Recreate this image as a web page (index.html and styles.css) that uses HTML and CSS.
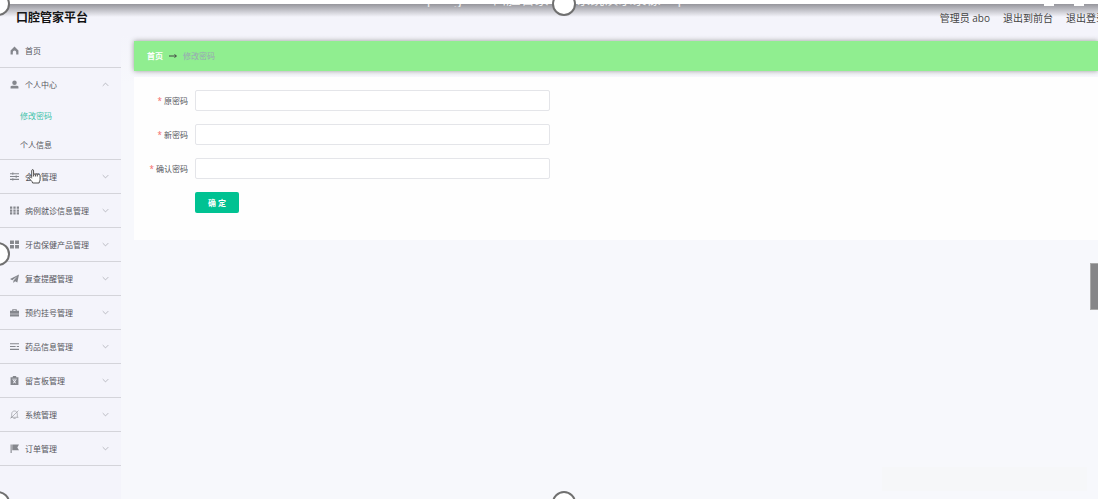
FILE: index.html
```html
<!DOCTYPE html>
<html lang="zh-CN">
<head>
<meta charset="utf-8">
<title>口腔管家平台</title>
<link rel="stylesheet" href="styles.css">
</head>
<body>
<div class="page">
  <header class="header">
    <h1 class="brand">口腔管家平台</h1>
    <nav class="account">
      <span>管理员 abo</span>
      <a href="#">退出到前台</a>
      <a href="#">退出登录</a>
    </nav>
  </header>
  <div class="body">
    <nav class="sidebar">
      <div class="group"><a class="item" href="#"><svg class="icon" viewBox="0 0 16 16"><path d="M8 1 1 8v7h4v-4a3 3 0 0 1 6 0v4h4V8z"/></svg><span>首页</span></a></div>
      <div class="group">
        <a class="item open" href="#"><svg class="icon" viewBox="0 0 16 16"><circle cx="8" cy="5" r="4"/><path d="M1 15v-3c0-2 2-2 4-2h6c2 0 4 0 4 2v3z"/></svg><span>个人中心</span><svg class="arrow" viewBox="0 0 10 10"><path d="m1 7 4-4 4 4"/></svg></a>
        <a class="sub active" href="#">修改密码</a>
        <a class="sub" href="#">个人信息</a>
      </div>
      <div class="group"><a class="item" href="#"><svg class="icon line" viewBox="0 0 16 16"><path d="M0 3h16M0 8h16M0 13h16M5 1v4M11 6v4M5 11v4"/></svg><span>会员管理</span><svg class="arrow" viewBox="0 0 10 10"><path d="m1 3 4 4 4-4"/></svg></a></div>
      <div class="group"><a class="item" href="#"><svg class="icon" viewBox="0 0 16 16"><path d="M0 1h4v4H0zM6 1h4v4H6zM12 1h4v4h-4zM0 6h4v4H0zM6 6h4v4H6zM12 6h4v4h-4zM0 11h4v4H0zM6 11h4v4H6zM12 11h4v4h-4z"/></svg><span>病例就诊信息管理</span><svg class="arrow" viewBox="0 0 10 10"><path d="m1 3 4 4 4-4"/></svg></a></div>
      <div class="group"><a class="item" href="#"><svg class="icon" viewBox="0 0 16 16"><path d="M0 1h7v6H0zM9 1h7v6H9zM0 9h7v6H0zM9 9h7v6H9z"/></svg><span>牙齿保健产品管理</span><svg class="arrow" viewBox="0 0 10 10"><path d="m1 3 4 4 4-4"/></svg></a></div>
      <div class="group"><a class="item" href="#"><svg class="icon" viewBox="0 0 16 16"><path d="M16 1 0 9l4 2 9-7-7 8v4l3-3 4 2z"/></svg><span>复查提醒管理</span><svg class="arrow" viewBox="0 0 10 10"><path d="m1 3 4 4 4-4"/></svg></a></div>
      <div class="group"><a class="item" href="#"><svg class="icon" viewBox="0 0 16 16"><path d="M4 5V2h8v3h4v5H0V5zM6 5h4V3.500H6zM0 11h16v4H0z"/></svg><span>预约挂号管理</span><svg class="arrow" viewBox="0 0 10 10"><path d="m1 3 4 4 4-4"/></svg></a></div>
      <div class="group"><a class="item" href="#"><svg class="icon line" viewBox="0 0 16 16"><path d="M0 3h16M0 8h10M12 8h4M0 13h16"/></svg><span>药品信息管理</span><svg class="arrow" viewBox="0 0 10 10"><path d="m1 3 4 4 4-4"/></svg></a></div>
      <div class="group"><a class="item" href="#"><svg class="icon" viewBox="0 0 16 16"><path fill-rule="evenodd" d="M1 2h4V0h6v2h4v14H1zM4 5v1h8V5zM5 7l2 3-2 3h2l1-2 1 2h2l-2-3 2-3H9L8 9 7 7z"/></svg><span>留言板管理</span><svg class="arrow" viewBox="0 0 10 10"><path d="m1 3 4 4 4-4"/></svg></a></div>
      <div class="group"><a class="item" href="#"><svg class="icon thin" viewBox="0 0 16 16"><path d="M1 13h14M3 13V7c0-7 10-7 10 0v6M6 15h4M15 1 1 15"/></svg><span>系统管理</span><svg class="arrow" viewBox="0 0 10 10"><path d="m1 3 4 4 4-4"/></svg></a></div>
      <div class="group"><a class="item" href="#"><svg class="icon" viewBox="0 0 16 16"><path d="M1 1h2v15H1zM4 1h12l-3 5 3 5H4z"/></svg><span>订单管理</span><svg class="arrow" viewBox="0 0 10 10"><path d="m1 3 4 4 4-4"/></svg></a></div>
    </nav>
    <main class="main">
      <div class="crumbs"><a href="#">首页</a><svg class="crumb-arrow" viewBox="0 0 16 8"><path d="M0 4h14M11 1l4 3-4 3"/></svg><span>修改密码</span></div>
      <form class="card">
        <div class="field"><label for="old"><i>*</i> 原密码</label><input id="old" type="password"></div>
        <div class="field"><label for="new"><i>*</i> 新密码</label><input id="new" type="password"></div>
        <div class="field"><label for="again"><i>*</i> 确认密码</label><input id="again" type="password"></div>
        <button class="submit" type="button">确 定</button>
      </form>
    </main>
  </div>
  <div class="shade"></div>
  <div class="topline"></div>
  <div class="caption">springboot口腔管家平台系统演示录像.mp4</div>
  <div class="controls"><i></i><i></i></div>
  <i class="handle top left"></i><i class="handle top center"></i><i class="handle middle left"></i><i class="handle bottom left"></i><i class="handle bottom center"></i>
  <div class="drawer"></div>
  <div class="patch"></div>
  <svg class="cursor" viewBox="0 0 14 16"><path d="M4 9V2c0-2 2-2 2 0v4c1-1 2 0 2 0 1-1 2 0 2 0 1-1 3 0 3 1v4c0 2-1 2-1 4H5c0-2-4-4-4-6 0-1 2-1 3 1M6 6v2M8 6v2M10 6v2"/></svg>
</div>
</body>
</html>
```
FILE: styles.css
```css
* { box-sizing: border-box; }
body {
  margin: 0;
  background: #f7f8fc;
  color: #54565c;
  font: 8px/12px "Noto Sans", "Noto Sans CJK SC", sans-serif;
}
a { color: inherit; text-decoration: none; }
i { font-style: normal; }
.page {
  position: relative;
  display: flex;
  flex-direction: column;
  min-height: 100vh;
  overflow: hidden;
}
.header {
  display: flex;
  align-items: center;
  justify-content: space-between;
  height: 34px;
  padding: 2px 0 0 16px;
  background: #f4f4fb;
}
.brand {
  margin: 0;
  color: #111;
  font-size: 12px;
  line-height: 32px;
}
.account {
  display: flex;
  gap: 13px;
  margin-right: -8px;
  color: #444;
  font-family: "Open Sans", "Noto Sans CJK SC", sans-serif;
  font-size: 10px;
  line-height: 32px;
  white-space: nowrap;
}
.body { display: flex; flex: 1; }
.sidebar {
  flex: 0 0 121px;
  background: #f4f4fb;
}
.group { border-bottom: 1px solid #d4d4da; }
.item {
  display: flex;
  align-items: center;
  gap: 6px;
  height: 33px;
  padding: 0 12px 0 10px;
  white-space: nowrap;
}
.icon {
  flex: none;
  width: 9px;
  height: 9px;
  fill: #85878d;
}
.icon.line, .icon.thin { fill: none; stroke: #85878d; stroke-width: 2; }
.icon.thin { stroke-width: 1; }
.arrow {
  flex: none;
  width: 7px;
  height: 7px;
  margin-left: auto;
  fill: none;
  stroke: #a2a4aa;
}
.sub {
  display: block;
  padding-left: 20px;
  line-height: 29px;
}
.sub.active { color: #3fc3aa; }
.main {
  flex: 1;
  min-width: 0;
  padding: 7px 0 0 13px;
  background: linear-gradient(#f4f4fb, #f7f8fc 50px);
}
.crumbs {
  display: flex;
  align-items: center;
  gap: 6px;
  height: 30px;
  padding-left: 13px;
  background: #90ee90;
  box-shadow: 0 0 5px #999;
  color: #9aa6b5;
}
.crumbs a { color: #fff; font-weight: bold; }
.crumb-arrow { width: 8px; height: 6px; fill: none; stroke: #444; stroke-width: 2; }
.card {
  margin-top: 6px;
  padding: 13px 0 27px 14px;
  background: #fefefe;
}
.field {
  display: flex;
  align-items: center;
  gap: 7px;
  margin-bottom: 13px;
}
.field label { width: 40px; text-align: right; white-space: nowrap; }
.field i { color: #f56c6c; }
.field input {
  width: 355px;
  height: 21px;
  padding: 0 8px;
  border: 1px solid #e4e5e9;
  border-radius: 2px;
  background: #fff;
  font: inherit;
}
.submit {
  display: block;
  width: 44px;
  height: 21px;
  margin-left: 47px;
  padding: 0;
  border: 0;
  border-radius: 2px;
  background: #00c292;
  color: #fff;
  font: inherit;
  font-weight: bold;
}
.shade, .topline {
  position: absolute;
  top: 0;
  right: 0;
  left: 0;
  pointer-events: none;
}
.shade { height: 17px; background: linear-gradient(rgba(60, 60, 65, .5) 25%, rgba(60, 60, 65, 0)); }
.topline { height: 4px; background: #fff; }
.caption {
  position: absolute;
  top: 4px;
  left: 420px;
  display: flex;
  align-items: flex-end;
  height: 3px;
  overflow: hidden;
  color: #eee;
  font-size: 14px;
  line-height: 16px;
  white-space: nowrap;
}
.controls {
  position: absolute;
  top: 4px;
  right: 14px;
  display: flex;
  gap: 20px;
}
.controls i { width: 10px; height: 2px; background: #fff; }
.handle {
  position: absolute;
  width: 24px;
  height: 24px;
  border: 2px solid #707070;
  border-radius: 50%;
  background: #fff;
}
.handle.top { top: -8px; }
.handle.middle { top: 242px; }
.handle.bottom { bottom: -16px; }
.handle.left { left: -14px; }
.handle.center { left: 552px; }
.drawer {
  position: absolute;
  top: 263px;
  right: 0;
  width: 8px;
  height: 47px;
  border: 1px solid #aaa;
  border-right: 0;
  background: #868688;
}
.patch {
  position: absolute;
  right: 11px;
  bottom: 8px;
  width: 205px;
  height: 24px;
  background: #f6f7f9;
}
.cursor {
  position: absolute;
  top: 169px;
  left: 28px;
  width: 13px;
  height: 15px;
  fill: #fff;
  stroke: #444;
}
```
